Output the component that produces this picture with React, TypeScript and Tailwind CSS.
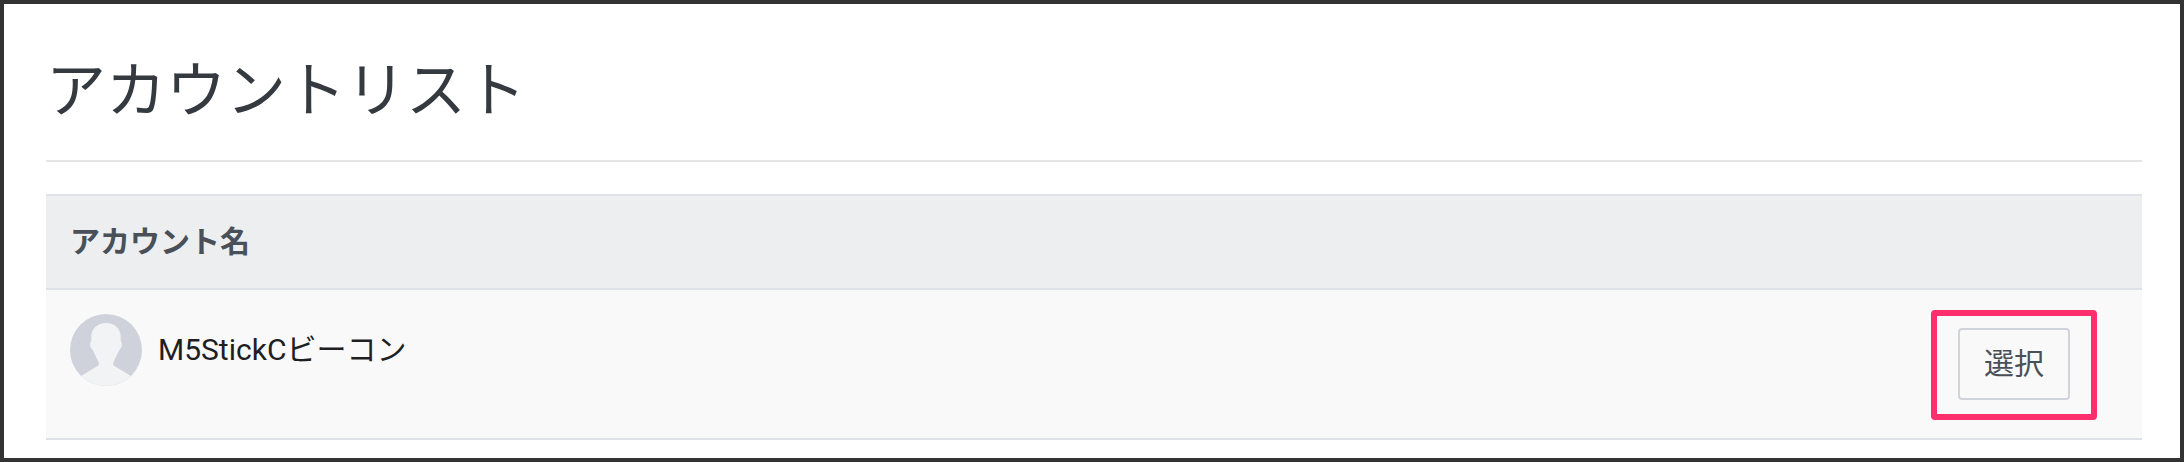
import React from "react";

type Account = { id: string; name: string };

const accounts: Account[] = [{ id: "m5stickc-beacon", name: "M5StickCビーコン" }];

function Avatar() {
  return (
    <svg className="size-[72px] shrink-0" viewBox="0 0 72 72" aria-hidden="true">
      <defs>
        <clipPath id="avatar-circle">
          <circle cx="36" cy="36" r="36" />
        </clipPath>
      </defs>
      <g clipPath="url(#avatar-circle)">
        <rect width="72" height="72" fill="#cfd2da" />
        <path
          fill="#f2f3f5"
          d="M36 9C27.5 9 21.5 14.5 21.3 22.5V27C20.2 27.8 19.8 30.5 20.4 32.5C20.9 34.2 22.2 35.2 23.3 37.2L28.6 48.2C29.3 49.8 29 51 27.6 52L11.5 61.8V72H60.5V61.8L44.4 52C43 51 42.7 49.8 43.4 48.2L48.7 37.2C49.8 35.2 51.1 34.2 51.6 32.5C52.2 30.5 51.8 27.8 50.7 27V22.5C50.5 14.5 44.5 9 36 9Z"
        />
      </g>
    </svg>
  );
}

function AccountRow({ account }: { account: Account }) {
  return (
    <tr className="bg-[#f9f9f9]">
      <td className="border-b-2 border-[#dee2e6] px-6 py-6 align-top">
        <div className="flex items-center gap-4">
          <Avatar />
          <span className="text-[30px] leading-10 text-[#1e1e23]">{account.name}</span>
        </div>
      </td>
      <td className="border-b-2 border-[#dee2e6] pt-5 pr-[45px] pb-[18px] align-top">
        <div className="ml-auto w-fit rounded-[4px] border-6 border-[#ff2f6d] px-[21px] pt-3 pb-[14px]">
          <button
            type="button"
            className="block rounded-[4px] border-2 border-[#ced4da] px-6 py-[14px] text-[30px] leading-10 text-[#495057]"
          >
            選択
          </button>
        </div>
      </td>
    </tr>
  );
}

export default function App() {
  return (
    <div className="min-h-screen border-4 border-[#333333] bg-white pt-[52px] pr-[38px] pb-[18px] pl-[42px] font-[Roboto,'Noto_Sans_CJK_JP',sans-serif]">
      <main>
        <h1 className="border-b-2 border-[#e4e5e7] pb-8 text-[60px] leading-[72px] font-normal text-[#343a40]">
          アカウントリスト
        </h1>
        <table className="mt-8 w-full border-separate border-spacing-0 text-left">
          <thead>
            <tr className="bg-[#edeef0]">
              <th
                scope="col"
                colSpan={2}
                className="border-y-2 border-[#dee2e6] px-6 py-[26px] text-[30px] leading-10 font-bold text-[#495057]"
              >
                アカウント名
              </th>
            </tr>
          </thead>
          <tbody>
            {accounts.map((account) => (
              <AccountRow key={account.id} account={account} />
            ))}
          </tbody>
        </table>
      </main>
    </div>
  );
}
